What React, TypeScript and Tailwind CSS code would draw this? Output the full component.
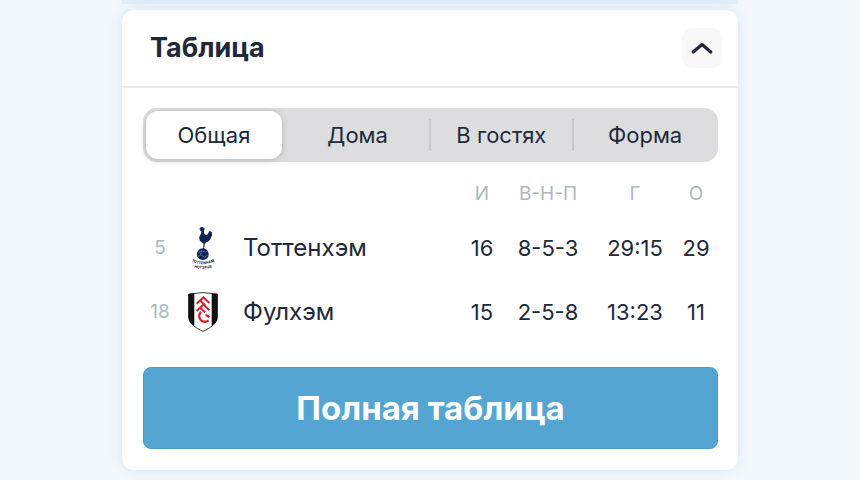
import { useState } from "react";

interface TeamRow {
  place: number;
  name: string;
  crest: "tottenham" | "fulham";
  played: number;
  record: string;
  goals: string;
  points: number;
}

const tabs = ["Общая", "Дома", "В гостях", "Форма"];

const teams: TeamRow[] = [
  {
    place: 5,
    name: "Тоттенхэм",
    crest: "tottenham",
    played: 16,
    record: "8-5-3",
    goals: "29:15",
    points: 29,
  },
  {
    place: 18,
    name: "Фулхэм",
    crest: "fulham",
    played: 15,
    record: "2-5-8",
    goals: "13:23",
    points: 11,
  },
];

const TottenhamCrest = () => (
  <svg viewBox="0 0 30 44" className="mx-auto h-11 w-[30px]" aria-hidden="true">
    <g fill="#132257">
      <path d="M11.4 3.1 12.2 1.6 14.4 1l1.9.9.3 1.6-.7 1.4.3 2.7c1.8 2.3 3.8 1.3 4.2-.7l.5-1.3 1.2-.6 1.8 1.2.1 3-1.2 3c-1.3 2.5-3 3.8-5.1 4.2l-1 2.1-.6 3.9 1.4 1.2-4 .1 1.7-1.3.3-5.1c-3.2-1.4-4.8-3.6-4.2-6.6l1.9-3.5.2-2.2-1.5.2.7-1.1z" />
      <circle cx="14.8" cy="28.2" r="5.9" />
    </g>
    <path
      d="m10.2 27 3.5-2.3 3.6 1.5 2-1.2M13.7 24.7l-1.2 4 4 2.4 3.2-1.9M10 30.5l2.5-1.8"
      fill="none"
      stroke="#8b96b8"
      strokeWidth="0.6"
    />
    <defs>
      <path id="spurs-top" d="M4.5 35.8Q15 40.8 25.5 35.8" />
      <path id="spurs-bottom" d="M5 41.5Q15 44 25 41.5" />
    </defs>
    <g fill="#132257" fontSize="3.7" fontWeight="700" textAnchor="middle">
      <text>
        <textPath href="#spurs-top" startOffset="50%">
          TOTTENHAM
        </textPath>
      </text>
      <text>
        <textPath href="#spurs-bottom" startOffset="50%">
          HOTSPUR
        </textPath>
      </text>
    </g>
  </svg>
);

const FulhamCrest = () => (
  <svg viewBox="0 0 30 40" className="mx-auto h-10 w-[30px]" aria-hidden="true">
    <path
      d="M.6 2.1Q15-.9 29.4 2.1V25c0 6.5-7.2 11-14.4 14.4C7.8 36 .6 31.5.6 25Z"
      fill="#fff"
      stroke="#222"
      strokeWidth="0.9"
    />
    <path
      d="M.6 2.1 6.3 1.2V34C3 31.9.6 29 .6 25ZM29.4 2.1 23.7 1.2V34c3.3-2.1 5.7-5 5.7-9Z"
      fill="#111"
    />
    <g fill="none" stroke="#d3222a" strokeWidth="2">
      <path d="m8.6 11.8 6.8-6.4 6 5.6M12.2 8.6l5 4.6" />
      <path d="m8.6 19 6.8-6.4 6 5.6M12.2 15.8l5 4.6" />
      <path
        d="M13 19.9a5.4 5.4 0 1 0 7.6 8.4M17.4 23.2a4.6 4.6 0 0 1 3.8 2.2"
        strokeWidth="2.3"
      />
    </g>
  </svg>
);

export default function App() {
  const [activeTab, setActiveTab] = useState(tabs[0]);
  const [open, setOpen] = useState(true);

  return (
    <div className="min-h-screen bg-[#f3f8fd] font-['Inter','Liberation_Sans',sans-serif] text-[#20283a]">
      <div className="mx-auto max-w-[616px]">
        <div className="mb-[6px] h-1 bg-[#e1edf6] shadow-[0_0_12px_#dceaf5]" />
        <section className="rounded-xl bg-white shadow-[0_0_14px_#d5e6f2]">
          <header className="flex items-center justify-between border-b-2 border-[#ebebed] py-4 pr-4 pl-7">
            <h2 className="text-[27px] leading-11 font-bold">Таблица</h2>
            <button
              type="button"
              aria-label="Свернуть"
              aria-expanded={open}
              onClick={() => setOpen(!open)}
              className="flex size-10 items-center justify-center rounded-[10px] bg-[#f8f8f9]"
            >
              <svg
                viewBox="0 0 24 14"
                className={`h-[14px] w-6 ${open ? "" : "rotate-180"}`}
                fill="none"
                stroke="currentColor"
                strokeWidth="3.2"
                strokeLinecap="round"
                strokeLinejoin="round"
                aria-hidden="true"
              >
                <path d="m3.2 11 8.8-7.5 8.8 7.500" />
              </svg>
            </button>
          </header>

          {open && (
            <div className="pt-5 pr-5 pb-[21px] pl-[21px]">
              <div className="flex rounded-[14px] bg-[#dddddf]">
                {tabs.map((tab, index) => (
                  <div key={tab} className="flex flex-1 items-center">
                    <button
                      type="button"
                      aria-pressed={tab === activeTab}
                      onClick={() => setActiveTab(tab)}
                      className={`m-[3px] flex-1 rounded-xl text-[22px] leading-12 ${
                        tab === activeTab
                          ? "bg-white shadow-[0_1px_6px_#b4b4b6]"
                          : ""
                      }`}
                    >
                      {tab}
                    </button>
                    <span
                      className={`h-8 w-[2px] ${
                        index === 1 || index === 2 ? "bg-[#cacace]" : ""
                      }`}
                    />
                  </div>
                ))}
              </div>

              <table className="mt-[10px] w-full table-fixed text-center text-[22px]">
                <colgroup>
                  <col className="w-[34px]" />
                  <col className="w-[52px]" />
                  <col />
                  <col className="w-11" />
                  <col className="w-[88px]" />
                  <col className="w-[86px]" />
                  <col className="w-10" />
                </colgroup>
                <thead>
                  <tr className="h-11 text-[19px] text-[#adb8bd]">
                    <td colSpan={3} />
                    <th className="font-normal">И</th>
                    <th className="font-normal">В-Н-П</th>
                    <th className="font-normal">Г</th>
                    <th className="pr-1 font-normal">О</th>
                  </tr>
                </thead>
                <tbody>
                  {teams.map((team) => (
                    <tr key={team.name} className="h-16">
                      <td className="text-[19px] text-[#adb8bd]">
                        {team.place}
                      </td>
                      <td>
                        {team.crest === "tottenham" ? (
                          <TottenhamCrest />
                        ) : (
                          <FulhamCrest />
                        )}
                      </td>
                      <th
                        scope="row"
                        className="pl-[14px] text-left text-2xl font-normal"
                      >
                        {team.name}
                      </th>
                      <td>{team.played}</td>
                      <td>{team.record}</td>
                      <td>{team.goals}</td>
                      <td className="pr-1">{team.points}</td>
                    </tr>
                  ))}
                </tbody>
              </table>

              <button
                type="button"
                className="mt-[23px] w-full rounded-lg border border-[#419ccb] bg-[#55a5d3] py-5 text-[33px] leading-10 font-bold text-white"
              >
                Полная таблица
              </button>
            </div>
          )}
        </section>
      </div>
    </div>
  );
}
